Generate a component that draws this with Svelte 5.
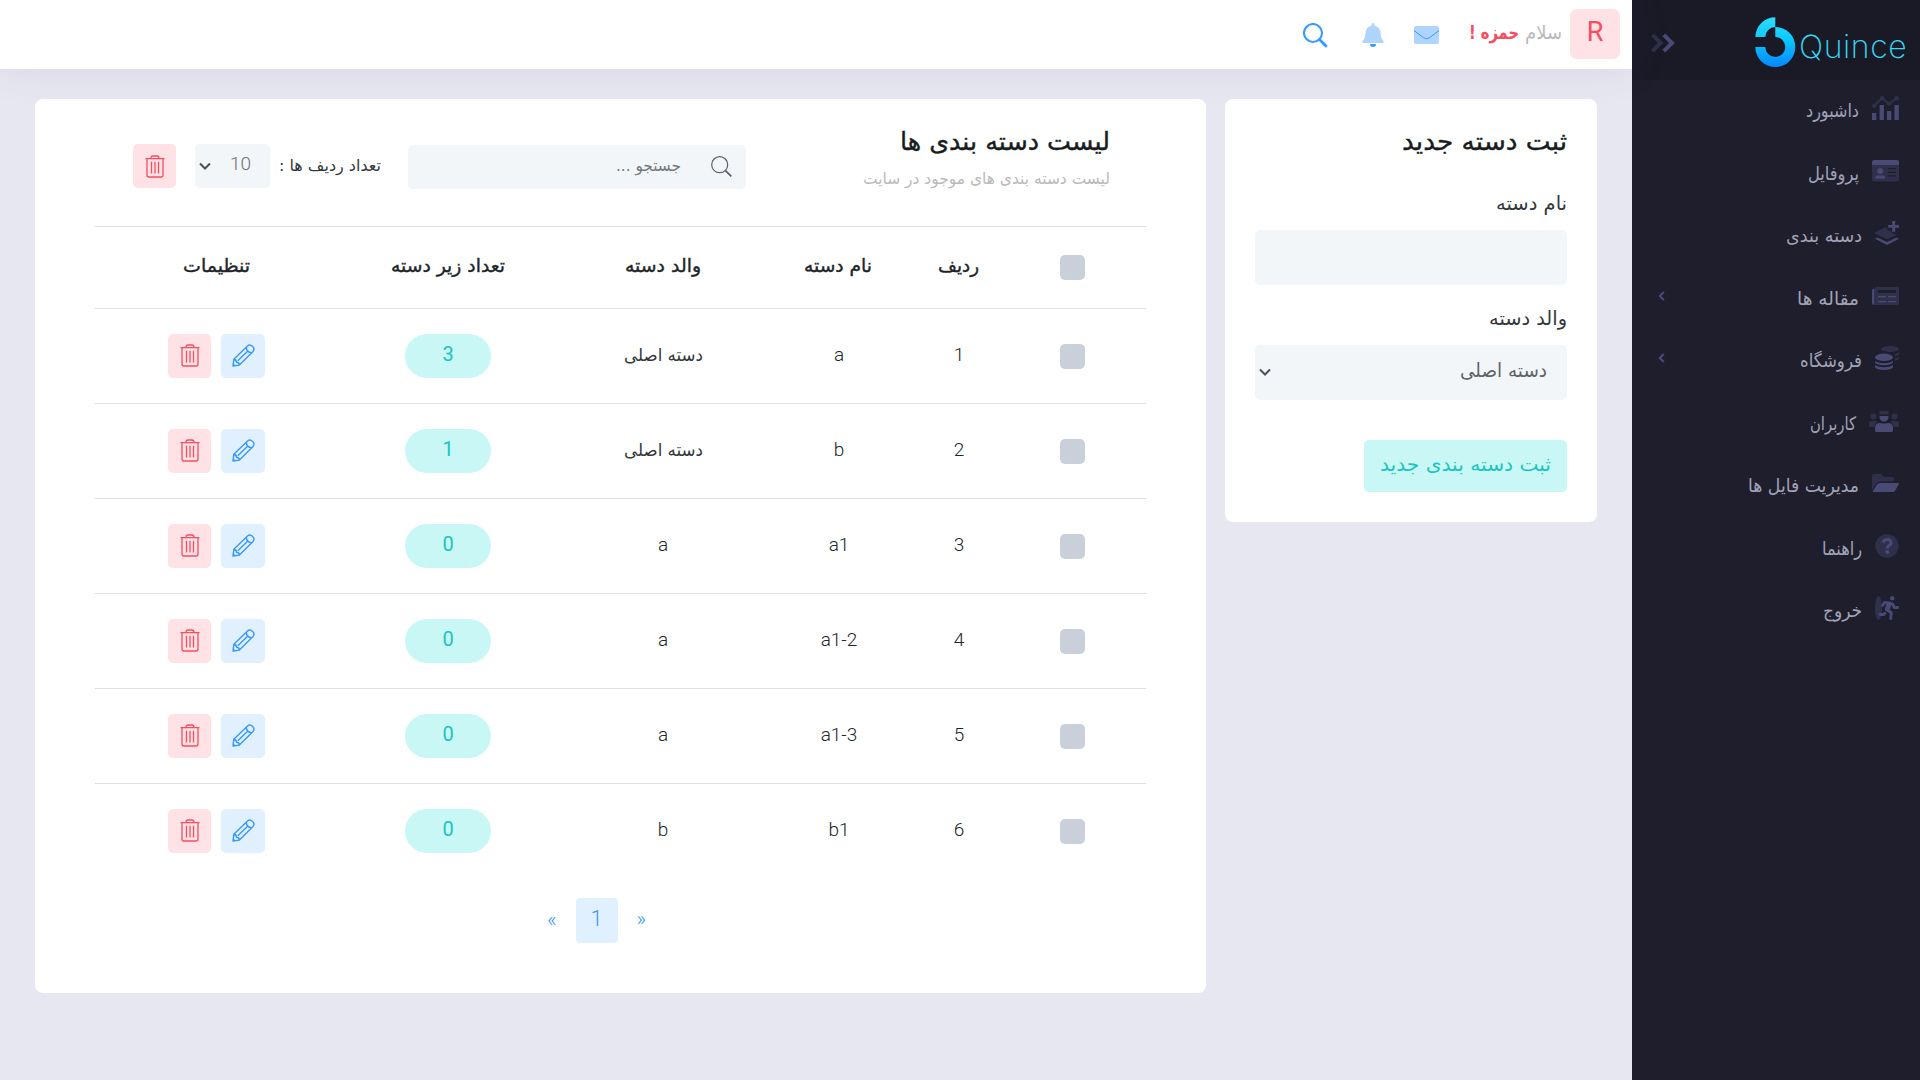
<script>
  const menu = [
    { label: 'داشبورد', icon: 'chart', w: 27, tw: 53 },
    { label: 'پروفایل', icon: 'card', w: 27, tw: 51 },
    { label: 'دسته بندی', icon: 'layers', w: 24, tw: 76 },
    { label: 'مقاله ها', icon: 'news', w: 27, tw: 62, more: true },
    { label: 'فروشگاه', icon: 'coins', w: 24, tw: 62, more: true },
    { label: 'کاربران', icon: 'users', w: 30, tw: 46 },
    { label: 'مدیریت فایل ها', icon: 'folder', w: 27, tw: 111 },
    { label: 'راهنما', icon: 'help', w: 24, tw: 40 },
    { label: 'خروج', icon: 'exit', w: 24, tw: 39 }
  ];
  const heads = [
    { label: 'ردیف', tw: 41 },
    { label: 'نام دسته', tw: 68 },
    { label: 'والد دسته', tw: 76 },
    { label: 'تعداد زیر دسته', tw: 114 },
    { label: 'تنظیمات', tw: 67 }
  ];
  const rows = [
    { n: 1, name: 'a', parent: 'دسته اصلی', root: true, count: 3 },
    { n: 2, name: 'b', parent: 'دسته اصلی', root: true, count: 1 },
    { n: 3, name: 'a1', parent: 'a', count: 0 },
    { n: 4, name: 'a1-2', parent: 'a', count: 0 },
    { n: 5, name: 'a1-3', parent: 'a', count: 0 },
    { n: 6, name: 'b1', parent: 'b', count: 0 }
  ];
</script>

<!-- Persian label squeezed to a fixed advance width -->
{#snippet fa(text, width, size, cls)}
  <svg class="fa {cls}" width={width} height={size * 2} role="img" aria-label={text}>
    <text x={width} y={size * 1.35} font-size={size} textLength={width} lengthAdjust="spacingAndGlyphs">{text}</text>
  </svg>
{/snippet}

{#snippet trash()}
  <svg class="ico" width="20" height="23" viewBox="0 0 20 23" fill="none" stroke="currentColor" stroke-width="1.3">
    <path d="M.5 3.700h19M6 3.500C6 1.800 6.800 1 8 1h4c1.200 0 2 .8 2 2.500M2 3.700V20q0 2 2 2h12q2 0 2-2V3.700M6.500 6.800v11.700M10 6.800v11.700M13.500 6.800v11.700" />
  </svg>
{/snippet}

{#snippet pencil()}
  <svg class="ico" width="23" height="23" viewBox="0 0 23 23" fill="none" stroke="currentColor" stroke-width="1.400" stroke-linejoin="round">
    <path d="M1 22 1.800 15.300 15.300 2.200q2.600-2.400 5.300.2t.2 5.300L7.400 21.100ZM14.300 3.400q.3 4.900 5.300 5.300M1.800 15.300q2.700.2 2.700 3 2.600 0 2.900 2.800M5.800 16.800 15.600 7.200" />
    <path d="M1 22.300v-3.300l3 2.800z" fill="currentColor" stroke="none" />
  </svg>
{/snippet}

<div class="app" dir="rtl">
  <aside>
    <div class="brand">
      <div class="logo" dir="ltr">
        <svg width="41" height="50" viewBox="0 0 41 50">
          <defs>
            <linearGradient id="lg" x1="0" y1="0" x2="0" y2="50" gradientUnits="userSpaceOnUse">
              <stop offset="0" stop-color="#2fdcff" />
              <stop offset=".45" stop-color="#0cc8ff" />
              <stop offset="1" stop-color="#0786ff" />
            </linearGradient>
          </defs>
          <path fill="url(#lg)" d="M.3 20A20 20 0 0 1 20.300.3V10A10 10 0 0 0 10.300 20Z" />
          <path fill="url(#lg)" d="M20.300 10A20 20 0 1 1 .3 30H10.300A10 10 0 1 0 20.300 20Z" />
        </svg>
        <span>Quince</span>
      </div>
      <svg class="toggle" width="24" height="20" viewBox="0 0 24 20" fill="none" stroke="#494b74" stroke-width="4">
        <path opacity=".45" d="m1.500 1.800 8.200 8.200-8.200 8.200" />
        <path d="m12.800 1.800 8.200 8.200-8.200 8.200" />
      </svg>
    </div>
    <nav>
      {#each menu as m}
        <a href="#top">
          <svg class="mi" width={m.w} height="24" viewBox="0 0 {m.w} 24" fill="#494b74">
            {#if m.icon === 'chart'}
              <g opacity=".42"><path fill="none" stroke="#494b74" stroke-width="2" d="M2 10 10 2l7 6 8-6" /><circle cx="2.200" cy="9.800" r="2.200" /><circle cx="10" cy="2.200" r="2.200" /><circle cx="17" cy="7.800" r="2.200" /><circle cx="24.800" cy="2.200" r="2.200" /></g>
              <path d="M0 17h4.300v7H0zM7.600 9h4.300v15H7.600zM15 15h4.300v9H15zM22.500 9h4.300v15h-4.300z" />
            {:else if m.icon === 'card'}
              <path opacity=".42" fill-rule="evenodd" d="M0 6h27v14.500q0 2-2 2H2q-2 0-2-2zM16 9v1.200h8V9zM16 12.700v1.200h8v-1.200zM16 16.300v1.200h8v-1.200z" />
              <path d="M2 1h23q2 0 2 2v3H0V3q0-2 2-2zM3.200 19.500q0-3 3-3h4q3 0 3 3z" /><circle cx="8.200" cy="12" r="3" />
            {:else if m.icon === 'layers'}
              <path opacity=".42" d="M9.500 6.500 0 11.500v1L11 17.700q1 .5 2 0l9-4q-5-.4-6.500-4.200h-3.200V6.800z" />
              <path d="M17.200 0h3v4H24v2.700h-3.800v4h-3v-4h-4V4h4zM0 17.800l2.500-1.300L12 21l9.500-4.500L24 17.800 12 24z" />
            {:else if m.icon === 'news'}
              <path opacity=".42" fill-rule="evenodd" d="M4.500 3H25.500Q27 3 27 4.500v15q0 1.500-1.500 1.500H3V4.500Q3 3 4.500 3zM6 6v3h18V6z" />
              <path d="M0 6q0-1.500 2.500-1.500V21Q0 21 0 19zM6 12h8v1.200H6zM16 12h8v1.200h-8zM6 17h8v1.200H6zM16 17h8v1.200h-8z" />
            {:else if m.icon === 'coins'}
              <g opacity=".42"><ellipse cx="15" cy="3" rx="9" ry="3" /><path d="M19.500 8.200Q22.500 7.500 24 6v2q-1.200 2-4 2.500zM19.800 12.600Q22.500 12 24 10.500v2q-1.200 1.800-4 2.300z" /></g>
              <ellipse cx="9" cy="11.300" rx="9" ry="3.700" /><path d="M0 15q3.500 2.200 9 2.200T18 15v1.600q-2 2.700-9 2.700T0 16.600zM0 19.300q3.500 2 9 2t9-2v2Q16 24 9 24T0 21.300z" />
            {:else if m.icon === 'users'}
              <g opacity=".42"><circle cx="4.500" cy="7.500" r="3" /><circle cx="25.500" cy="7.500" r="3" /><path d="M0 15q0-3 3-3h3q1.200 0 2 1-2.400 2-2.800 5H1q-1 0-1-1zM30 15q0-3-3-3h-3q-1.200 0-2 1 2.400 2 2.800 5H29q1 0 1-1zM10.500 1.500l2.200 1L15 1.500l2.300 1 2.200-1V5.500h-9z" /></g>
              <path d="M10.500 7h9v1a4.500 4.500 0 0 1-9 0zM6 19q0-5 5-5 4 1.200 8 0 5 0 5 5v2.500q0 1.500-1.500 1.500h-15Q6 23 6 21.500z" />
            {:else if m.icon === 'folder'}
              <path opacity=".42" d="M0 19V5q0-2 2-2h7l3 3h8q2 0 2 2v2.500H8q-2 0-3 1.500z" />
              <path d="M8 12h18q1.400 0 .7 1.300L23 20q-.6 1-2 1H1.500Q.3 21 1 19.800L5 13.600Q6 12 8 12z" />
            {:else if m.icon === 'help'}
              <circle opacity=".42" cx="12" cy="12" r="11.700" /><path fill="none" stroke="#494b74" stroke-width="3" d="M8 8.500q1-3 4.200-3 3.800 0 3.800 3.200 0 2-2.200 3Q12.200 12.500 12.200 14.500" /><circle cx="12.200" cy="18" r="2" />
            {:else}
              <ellipse opacity=".42" cx="3.500" cy="12" rx="3.500" ry="12" /><circle cx="17.200" cy="2.200" r="2.200" />
              <path fill="none" stroke="#494b74" stroke-width="2.800" stroke-linecap="round" stroke-linejoin="round" d="M7.500 9.500 9.500 6.500 14 6.800 17.500 8l1.800 3.500h3.300M13.500 7 11.300 13.500l5 3.200-.6 5.800M10 17.300 8.800 18.500H5" /><path d="m12 5.500 5 1.800-2.700 7-4-1.300z" />
            {/if}
          </svg>
          {@render fa(m.label, m.tw, 18.500, 'side')}
          {#if m.more}
            <svg class="more" width="7" height="10" viewBox="0 0 7 10" fill="none" stroke="#494b74" stroke-width="2.200"><path d="M5.800 1 1.800 5l4 4" /></svg>
          {/if}
        </a>
      {/each}
    </nav>
  </aside>

  <div class="main">
    <header>
      <div class="avatar">R</div>
      <div class="hello">{@render fa('سلام', 37, 19, 'mute')}{@render fa('حمزه !', 50, 19, 'red')}</div>
      <svg class="mail" width="25" height="18" viewBox="0 0 25 18"><rect width="25" height="18" rx="2" fill="#afd5ff" /><path d="M0 4.500 9.500 11.700Q12.500 14 15.500 11.700L25 4.500" fill="none" stroke="#3699ff" /></svg>
      <svg class="bell" width="22" height="24" viewBox="0 0 22 24"><path fill="#afd5ff" d="M11 0q1.400 0 1.400 1.500v1q5.800 1.500 6.200 8 .2 5 2.800 7.200 1 1.800-.8 2.300H1.400q-1.800-.5-.8-2.300 2.600-2.200 2.800-7.200.4-6.500 6.200-8v-1Q9.600 0 11 0z" /><path fill="#3699ff" d="M8 21h6q0 3-3 3t-3-3z" /></svg>
      <svg class="find" width="25" height="25" viewBox="0 0 25 25" fill="none" stroke="#3699ff"><circle cx="10" cy="10" r="9" stroke-width="2.100" /><path stroke-width="2.800" d="m16.500 16.500 7.200 7.200" /></svg>
    </header>

    <div class="content">
      <section class="card form">
        <h2>{@render fa('ثبت دسته جدید', 165, 25, 'title')}</h2>
        <div class="lbl">{@render fa('نام دسته', 71, 19.500, 'dark')}</div>
        <div class="field"></div>
        <div class="lbl second">{@render fa('والد دسته', 78, 19.500, 'dark')}</div>
        <div class="field select">
          {@render fa('دسته اصلی', 87, 19.500, 'soft')}
          <svg width="12" height="9" viewBox="0 0 12 9" fill="none" stroke="#495057" stroke-width="2"><path d="m1 1.500 5 5 5-5" /></svg>
        </div>
        <button class="submit">{@render fa('ثبت دسته بندی جدید', 171, 19.500, 'teal')}</button>
      </section>

      <section class="card list">
        <div class="tools">
          <div class="heading">
            {@render fa('لیست دسته بندی ها', 210, 25, 'title')}
            {@render fa('لیست دسته بندی های موجود در سایت', 247, 16, 'mute')}
          </div>
          <div class="search">
            <svg width="21" height="21" viewBox="0 0 21 21" fill="none" stroke="#5b5f63" stroke-width="1.200"><circle cx="8.700" cy="8.700" r="8" /><path stroke-width="1.700" d="m14.300 14.300 6 6" /></svg>
            {@render fa('جستجو ...', 65, 16, 'hint')}
          </div>
          {@render fa('تعداد ردیف ها :', 102, 16, 'dark')}
          <div class="pick">
            <span>10</span>
            <svg width="12" height="9" viewBox="0 0 12 9" fill="none" stroke="#495057" stroke-width="2"><path d="m1 1.500 5 5 5-5" /></svg>
          </div>
          <button class="del">{@render trash()}</button>
        </div>

        <div class="row head">
          <i class="box"></i>
          {#each heads as h}
            <div>{@render fa(h.label, h.tw, 18.500, 'th')}</div>
          {/each}
        </div>
        {#each rows as r}
          <div class="row">
            <i class="box"></i>
            <div class="num">{r.n}</div>
            <div class="num" dir="ltr">{r.name}</div>
            <div>
              {#if r.root}{@render fa(r.parent, 79, 17.500, 'dark')}{:else}{r.parent}{/if}
            </div>
            <div><span class="badge">{r.count}</span></div>
            <div class="acts">
              <button class="edit">{@render pencil()}</button>
              <button class="del">{@render trash()}</button>
            </div>
          </div>
        {/each}

        <div class="pages" dir="ltr">
          <span>«</span><b>1</b><span>»</span>
        </div>
      </section>
    </div>
  </div>
</div>

<style>
  :global(body) { background: #e7e7f1; }
  * { box-sizing: border-box; }
  .app { display: flex; height: 1080px; overflow: hidden; font-family: Roboto, "DejaVu Sans Condensed", "DejaVu Sans", sans-serif; font-weight: 300; color: #212529; }
  svg { display: block; flex: none; }
  button { border: 0; padding: 0; margin: 0; font: inherit; display: flex; align-items: center; justify-content: center; border-radius: 5px; }

  .fa { overflow: visible; direction: rtl; font-family: "DejaVu Sans Condensed", "DejaVu Sans", sans-serif; font-weight: 400; fill: #212529; }
  .fa.side { fill: #a2a3b7; margin-top: 5px; }
  .fa.mute { fill: #b9b9bd; }
  .fa.red { fill: #f64e60; font-weight: 700; }
  .fa.title { fill: #181c1f; stroke: #181c1f; stroke-width: .35px; }
  .fa.th { stroke: #212529; stroke-width: .35px; }
  .fa.dark { fill: #33383d; }
  .fa.soft { fill: #5f6468; }
  .fa.hint { fill: #73787c; }
  .fa.teal { fill: #1bc5bd; }

  aside { width: 288px; flex: none; background: #1e1e2d; }
  .brand { height: 80px; background: #1a1a27; display: flex; justify-content: space-between; align-items: flex-start; padding: 17px 13px 0 19px; }
  .logo { display: flex; gap: 3px; width: 152px; }
  .logo span { font: 200 32px/50px Inter, sans-serif; letter-spacing: .6px; color: #36d9f5; padding-top: 5px; }
  .toggle { margin-top: 16px; }
  nav a { height: 62.5px; display: flex; align-items: center; padding: 0 21px 6px 26px; }
  .mi { margin-left: 13px; }
  .more { margin-right: auto; }

  .main { flex: 1; min-width: 0; }
  header { height: 69px; background: #fff; box-shadow: 0 0 40px rgba(82, 63, 105, .1); display: flex; align-items: center; padding: 0 12px 1px; }
  .avatar { width: 50px; height: 50px; border-radius: 7px; background: #ffe2e5; color: #f64e60; font-size: 27px; font-weight: 400; line-height: 46px; text-align: center; }
  .hello { display: flex; gap: 6px; margin: 0 8px 4px 0; }
  .mail { margin: 2px 30px 0 0; }
  .bell { margin: 2px 30px 0 0; }
  .find { margin: 2px 34px 0 0; }

  .content { display: flex; align-items: flex-start; gap: 19px; padding: 30px 35px 0; }
  .card { background: #fff; border-radius: 8px; }
  .form { width: 372px; height: 423px; padding: 17px 30px; }
  h2 { margin: 0; height: 69px; }
  .lbl { height: 45px; display: flow-root; }
  .lbl .fa { margin-top: -1px; }
  .second { margin-top: 15px; }
  .field { height: 55px; border-radius: 5px; background: #f3f6f9; }
  .select { display: flex; align-items: center; justify-content: space-between; padding: 0 20px 0 4px; }
  .select .fa, .submit .fa { margin-bottom: 4px; }
  .submit { width: 203px; height: 52px; margin-top: 40px; background: #c9f7f5; }

  .list { width: 1171px; height: 894px; padding: 0 60px; }
  .tools { height: 127px; display: flex; align-items: flex-start; padding: 45px 36px 0 38px; }
  .heading { width: 364px; margin-top: -28px; }
  .heading .fa + .fa { margin-top: -4px; }
  .search { width: 338px; height: 44px; margin: 1px 0 0 27px; padding: 0 14px; border-radius: 5px; background: #f3f6f9; display: flex; align-items: center; gap: 30px; }
  .search .fa { margin-bottom: 5px; }
  .search svg:first-child { margin-bottom: 2px; }
  .tools > .fa { margin-top: 5px; }
  .pick { width: 75px; height: 44px; margin: 0 9px 0 19px; padding: 0 20px 0 4px; border-radius: 5px; background: #f3f6f9; display: flex; align-items: center; justify-content: space-between; font-size: 19px; color: #6c7177; }
  .pick span { padding-bottom: 5px; margin-right: -1px; }
  .del { width: 43px; height: 44px; background: #ffe2e5; color: #f64e60; padding-left: 1px; }
  .acts .del { padding-bottom: 1px; }
  .edit { width: 44px; height: 44px; background: #e1f0ff; color: #3699ff; padding: 0 0 2px 2px; }

  .row { height: 95px; border-top: 1px solid #dee0e6; display: grid; grid-template-columns: 148px 80px 160px 190px 240px 224px; align-items: center; justify-items: center; font-size: 19px; font-weight: 300; }
  .head { height: 82px; }
  .row > div { padding-bottom: 4px; }
  .head > div { padding-bottom: 4px; }
  .row > .num { padding-left: 2px; }
  .row > .acts { padding: 0; }
  .box { width: 25px; height: 25px; border-radius: 5px; background: #c9d0d9; }
  .badge { display: block; width: 86px; height: 44px; margin-top: 4px; border-radius: 22px; background: #c9f7f5; color: #1bc5bd; line-height: 41px; text-align: center; font-weight: 400; font-size: 20px; }
  .acts { display: flex; gap: 10px; }

  .pages { display: flex; align-items: center; justify-content: center; margin-top: 20px; padding-right: 48px; color: #3699ff; font-size: 21px; gap: 19px; }
  .pages span { padding-bottom: 4px; }
  .pages b { width: 42px; height: 45px; border-radius: 4px; background: #e1f0ff; line-height: 41px; text-align: center; font-weight: 300; font-size: 22px; }
</style>
